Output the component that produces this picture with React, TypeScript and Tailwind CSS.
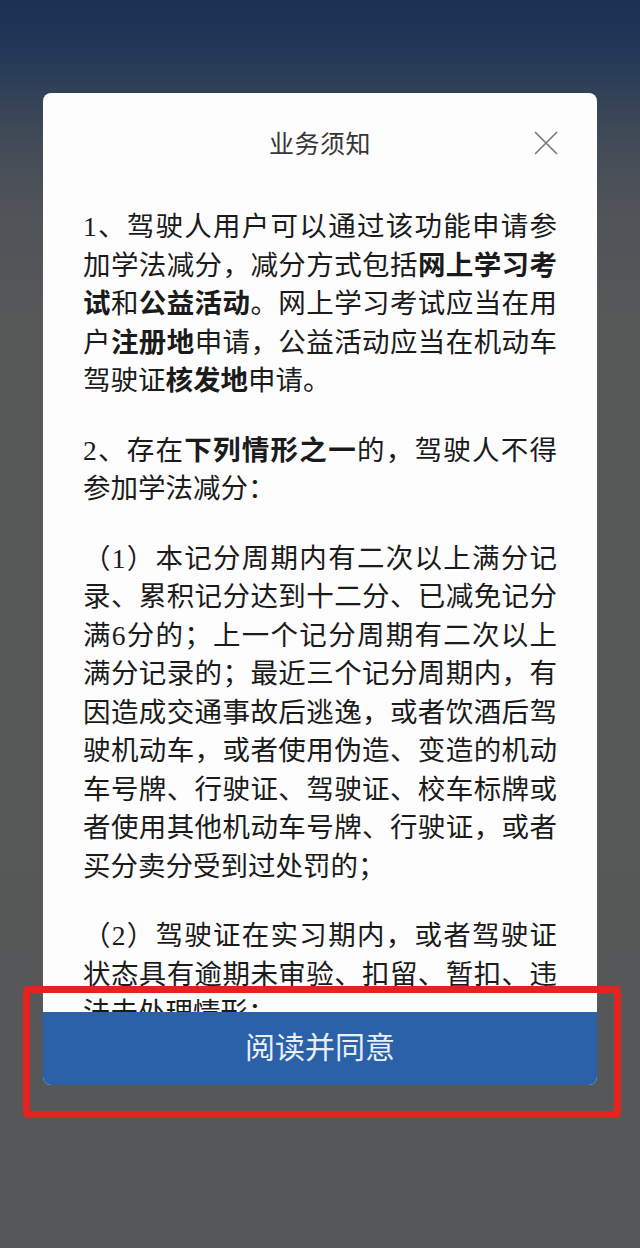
type Seg = { t: string; b?: boolean };

// each line is written out as it wraps in the screenshot; last = paragraph end (not justified)
type Line = { segs: Seg[]; last?: boolean };

const paragraphs: Line[][] = [
  [
    { segs: [{ t: "1、驾驶人用户可以通过该功能申请参" }] },
    { segs: [{ t: "加学法减分，减分方式包括" }, { t: "网上学习考", b: true }] },
    { segs: [{ t: "试", b: true }, { t: "和" }, { t: "公益活动", b: true }, { t: "。网上学习考试应当在用" }] },
    { segs: [{ t: "户" }, { t: "注册地", b: true }, { t: "申请，公益活动应当在机动车" }] },
    { segs: [{ t: "驾驶证" }, { t: "核发地", b: true }, { t: "申请。" }], last: true },
  ],
  [
    { segs: [{ t: "2、存在" }, { t: "下列情形之一", b: true }, { t: "的，驾驶人不得" }] },
    { segs: [{ t: "参加学法减分：" }], last: true },
  ],
  [
    { segs: [{ t: "（1）本记分周期内有二次以上满分记" }] },
    { segs: [{ t: "录、累积记分达到十二分、已减免记分" }] },
    { segs: [{ t: "满6分的；上一个记分周期有二次以上" }] },
    { segs: [{ t: "满分记录的；最近三个记分周期内，有" }] },
    { segs: [{ t: "因造成交通事故后逃逸，或者饮酒后驾" }] },
    { segs: [{ t: "驶机动车，或者使用伪造、变造的机动" }] },
    { segs: [{ t: "车号牌、行驶证、驾驶证、校车标牌或" }] },
    { segs: [{ t: "者使用其他机动车号牌、行驶证，或者" }] },
    { segs: [{ t: "买分卖分受到过处罚的；" }], last: true },
  ],
  [
    { segs: [{ t: "（2）驾驶证在实习期内，或者驾驶证" }] },
    { segs: [{ t: "状态具有逾期未审验、扣留、暂扣、违" }] },
    { segs: [{ t: "法未处理情形；" }], last: true },
  ],
];

function CloseIcon() {
  return (
    <svg width="24" height="24" viewBox="0 0 24 24" fill="none">
      <path d="M1.5 1.5 L22.5 22.5 M22.5 1.5 L1.5 22.5" stroke="#7b7b7b" strokeWidth="1.7" strokeLinecap="round" />
    </svg>
  );
}

function NoticeLine({ line }: { line: Line }) {
  return (
    <div
      className={
        line.last
          ? "whitespace-nowrap text-left"
          : "whitespace-nowrap text-justify [text-align-last:justify]"
      }
    >
      {line.segs.map((s, i) =>
        s.b ? (
          <span key={i} className="font-bold">
            {s.t}
          </span>
        ) : (
          <span key={i}>{s.t}</span>
        )
      )}
    </div>
  );
}

export default function App() {
  return (
    <div className="relative w-[640px] h-[1248px] overflow-hidden bg-[linear-gradient(180deg,#1a3154_0%,#223858_4%,#3d4856_10%,#4f5359_16%,#575858_26%,#565758_100%)] font-['Noto_Sans_CJK_SC',sans-serif]">
      {/* modal */}
      <div className="ml-[43px] pt-[93px]">
        <div className="w-[554px] h-[992px] flex flex-col rounded-[8px] overflow-hidden bg-[#fdfdfd]">
          {/* header */}
          <div className="relative h-[100px] shrink-0 flex items-center justify-center">
            <span className="text-[25px] text-[#363636] tracking-[0.5px]">业务须知</span>
            <div className="absolute right-[39px] top-[38px]">
              <CloseIcon />
            </div>
          </div>

          {/* scrollable body, cut off by the button */}
          <div className="flex-1 overflow-hidden px-[40px] pt-[15px] text-[27.5px] leading-[38.5px] text-[#1b1b1b] font-['Liberation_Serif','Noto_Sans_CJK_SC',serif]">
            {paragraphs.map((p, i) => (
              <div key={i} className={i === 0 ? "" : "mt-[31px]"}>
                {p.map((line, j) => (
                  <NoticeLine key={j} line={line} />
                ))}
              </div>
            ))}
          </div>

          {/* agree button */}
          <button className="h-[73px] shrink-0 w-full flex items-center justify-center bg-[#2a61a9] text-[30px] text-[#e9eff8] pb-[6px]">
            阅读并同意
          </button>
        </div>
      </div>

      {/* red highlight frame drawn over the button */}
      <div className="absolute left-[23px] top-[986px] w-[598px] h-[132px] border-[7px] border-[#e3231f] rounded-[5px]" />
    </div>
  );
}
